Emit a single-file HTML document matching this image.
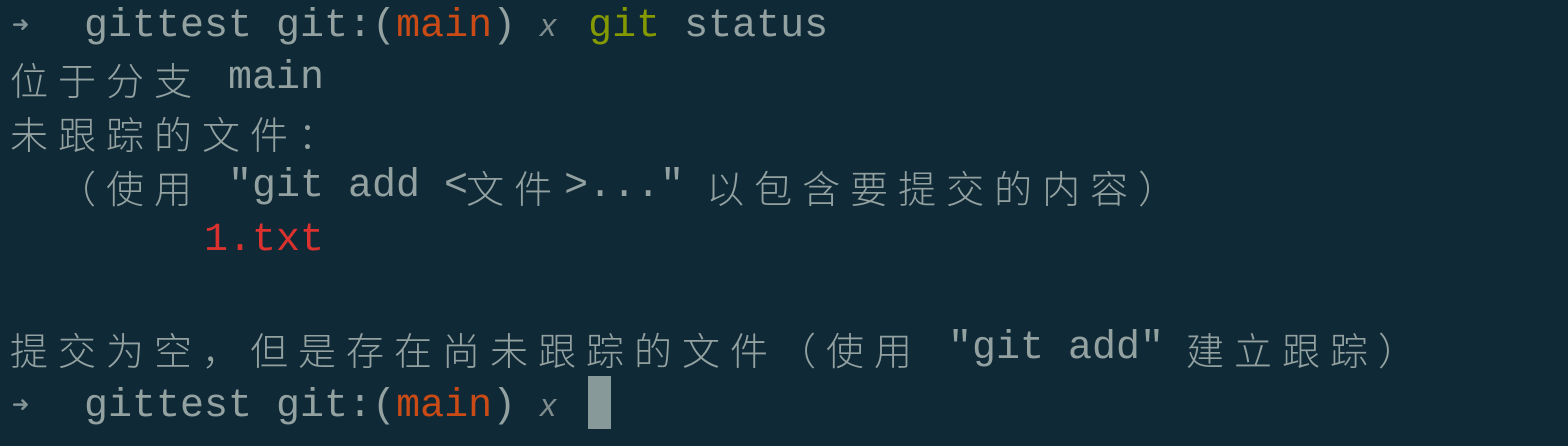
<!DOCTYPE html>
<html><head><meta charset="utf-8"><style>
html,body{margin:0;padding:0;background:#0f2a36;width:1568px;height:446px;overflow:hidden}
.t{position:absolute;left:12px;top:-2px;font-family:"Liberation Mono","DejaVu Sans Mono","Noto Sans CJK SC",monospace;font-size:40px;line-height:54px;color:#93a1a1}
.l{height:54px;white-space:pre}
.c{display:inline-block;width:48px;text-align:left;text-indent:-2px;font-family:"Noto Sans CJK SC",sans-serif;font-size:38px;font-weight:300;line-height:54px;vertical-align:top}
.o{color:#cb4b16}.g{color:#859900}.r{color:#dc322f}
.a{font-family:"DejaVu Sans Mono",monospace;font-size:28px;color:#839496;display:inline-block;width:24px;vertical-align:2px}
.x{display:inline-block;width:24px;font-family:"Liberation Sans",sans-serif;font-style:italic;font-size:32px;color:#7f8c8d}
.cur{display:inline-block;width:23px;height:53px;background:#889999;vertical-align:-13px}
</style></head><body>
<div class="t"><div class="l"><span class="a">➜</span>  gittest git:(<span class="o">main</span>) <span class="x">x</span> <span class="g">git</span> status</div><div class="l"><span class="c">位</span><span class="c">于</span><span class="c">分</span><span class="c">支</span> main</div><div class="l"><span class="c">未</span><span class="c">跟</span><span class="c">踪</span><span class="c">的</span><span class="c">文</span><span class="c">件</span><span class="c">：</span></div><div class="l">  <span class="c">（</span><span class="c">使</span><span class="c">用</span> "git add &lt;<span class="c">文</span><span class="c">件</span>&gt;..." <span class="c">以</span><span class="c">包</span><span class="c">含</span><span class="c">要</span><span class="c">提</span><span class="c">交</span><span class="c">的</span><span class="c">内</span><span class="c">容</span><span class="c">）</span></div><div class="l">        <span class="r">1.txt</span></div><div class="l"> </div><div class="l"><span class="c">提</span><span class="c">交</span><span class="c">为</span><span class="c">空</span><span class="c">，</span><span class="c">但</span><span class="c">是</span><span class="c">存</span><span class="c">在</span><span class="c">尚</span><span class="c">未</span><span class="c">跟</span><span class="c">踪</span><span class="c">的</span><span class="c">文</span><span class="c">件</span><span class="c">（</span><span class="c">使</span><span class="c">用</span> "git add" <span class="c">建</span><span class="c">立</span><span class="c">跟</span><span class="c">踪</span><span class="c">）</span></div><div class="l"><span class="a">➜</span>  gittest git:(<span class="o">main</span>) <span class="x">x</span> <span class="cur"></span></div></div>
</body></html>
